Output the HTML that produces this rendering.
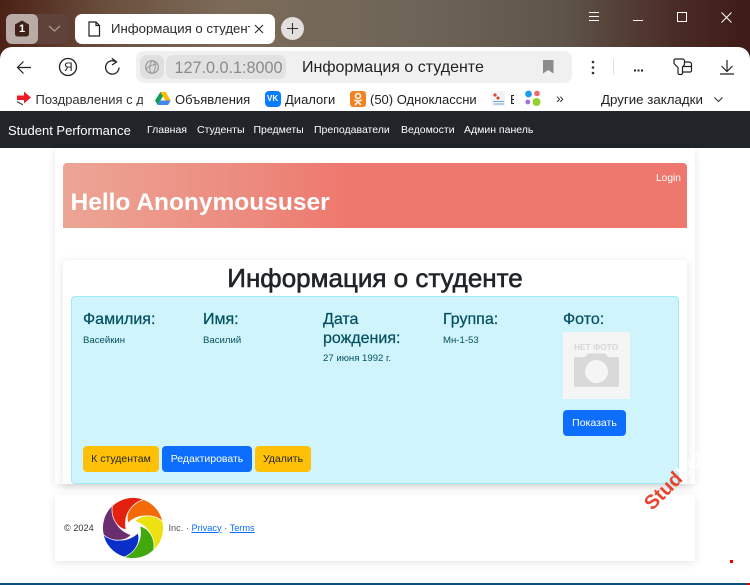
<!DOCTYPE html>
<html lang="ru"><head><meta charset="utf-8"><title>Информация о студенте</title>
<style>
html,body{margin:0;padding:0;width:750px;height:585px;overflow:hidden;background:#fff}
body{position:relative;font-family:"Liberation Sans","Noto Sans CJK SC",sans-serif;color:#212529}
.a{position:absolute;white-space:nowrap;line-height:1}
.b{position:absolute}
.btn{position:absolute;height:26px;line-height:26px;text-align:center;border-radius:4px;font-size:10.5px;white-space:nowrap}
.h{font-size:16px;color:#055160;line-height:1;-webkit-text-stroke:.25px #055160}
.s{font-size:9.6px;color:#055160}
.nav{color:#fff;font-size:10.5px;top:125px}
.bm{font-size:13px;color:#222;top:93px}
svg{position:absolute;overflow:visible}
</style></head><body>
<!-- browser chrome -->
<div class="b" style="left:0;top:0;width:750px;height:111px;background:linear-gradient(90deg,#4c2116 0%,#6b5140 15%,#7c6b58 30%,#6e6558 55%,#5f5449 75%,#4a2c26 90%,#3f1a17 100%)"></div>
<div class="b" style="left:6px;top:14px;width:63px;height:30px;border-radius:6px;background:#5f4239"></div>
<div class="b" style="left:6px;top:14px;width:32px;height:30px;border-radius:6px;background:#b9aba6"></div>
<svg style="left:13px;top:20px" width="18" height="18"><path d="M9 .5L16 4.5V14a2.500 2.500 0 0 1-2.500 2.500h-9A2.500 2.500 0 0 1 2 14V4.500Z" fill="#40211a"/></svg>
<div class="a" style="left:19px;top:24px;font-size:11px;font-weight:bold;color:#fff">1</div>
<svg style="left:48px;top:25px" width="14" height="8"><path d="M1 1l5.500 5L12 1" fill="none" stroke="#a89690" stroke-width="1.300"/></svg>
<div class="b" style="left:75px;top:14px;width:200px;height:30px;border-radius:7px;background:#fff"></div>
<svg style="left:88px;top:21px" width="13" height="16"><path d="M1 1h7l3.500 3.500V15H1Z M8 1v3.500h3.500" fill="none" stroke="#222" stroke-width="1.200"/></svg>
<div class="a" style="left:111px;top:22px;width:139px;overflow:hidden;font-size:13.200px;color:#2a2a2a">Информация о студент</div>
<svg style="left:254px;top:24px" width="10" height="10"><path d="M1 1l8 8M9 1l-8 8" stroke="#333" stroke-width="1.200"/></svg>
<div class="b" style="left:281px;top:17px;width:23px;height:23px;border-radius:50%;background:#e2dfdc"></div>
<svg style="left:287px;top:23px" width="11" height="11"><path d="M5.500 0v11M0 5.500h11" stroke="#333" stroke-width="1.100"/></svg>
<svg style="left:589px;top:12px" width="10" height="9"><path d="M0 .5h10M0 4.500h10M0 8.500h10" stroke="#fff" stroke-width="1"/></svg>
<div class="b" style="left:633px;top:20px;width:10px;height:1px;background:#fff"></div>
<div class="b" style="left:677px;top:12px;width:8px;height:8px;border:1px solid #fff"></div>
<svg style="left:721px;top:12px" width="11" height="11"><path d="M.5.500l10 10M10.500.500l-10 10" stroke="#fff" stroke-width="1"/></svg>
<!-- toolbar -->
<div class="b" style="left:0;top:47px;width:750px;height:64px;background:#fff;border-radius:12px 12px 0 0"></div>
<svg style="left:16px;top:60px" width="16" height="15"><path d="M15 7.500H1.500M7.500 1.500l-6 6 6 6" fill="none" stroke="#222" stroke-width="1.200"/></svg>
<svg style="left:58px;top:57px" width="20" height="20"><circle cx="10" cy="10" r="8.500" fill="none" stroke="#222" stroke-width="1.300"/></svg>
<div class="a" style="left:64px;top:61px;font-size:12px;color:#222">Я</div>
<svg style="left:104px;top:57px" width="17" height="19"><path d="M12.500 5.200A6.700 6.700 0 1 0 15 10.500" fill="none" stroke="#222" stroke-width="1.300"/><path d="M7.800 1.200L12.500 5l-4.500 3" fill="none" stroke="#222" stroke-width="1.300"/></svg>
<div class="b" style="left:136px;top:51px;width:436px;height:32px;border-radius:8px;background:#f0f0f0"></div>
<div class="b" style="left:140px;top:55px;width:24px;height:24px;border-radius:7px;background:#dfdfdf"></div>
<svg style="left:145px;top:60px" width="14" height="14"><circle cx="7" cy="7" r="6.300" fill="none" stroke="#999" stroke-width="1.200"/><path d="M1 9c3-3 6-4 11-5M7 1c-3 4-3 8-1 12M8 1c3 3 3 8 0 12" fill="none" stroke="#999"/></svg>
<div class="b" style="left:166px;top:55px;width:120px;height:24px;border-radius:7px;background:#e2e2e2"></div>
<div class="a" style="left:174.500px;top:60px;font-size:16.200px;color:#8a8a8a">127.0.0.1:8000</div>
<div class="a" style="left:302px;top:60px;font-size:16px;color:#222">Информация о студенте</div>
<svg style="left:543px;top:60px" width="11" height="14"><path d="M0 0h10.500v13.500L5.250 10 0 13.500Z" fill="#8c8c8c"/></svg>
<svg style="left:591px;top:60px" width="4" height="15"><circle cx="2" cy="2" r="1.300" fill="#333"/><circle cx="2" cy="7.500" r="1.300" fill="#333"/><circle cx="2" cy="13" r="1.300" fill="#333"/></svg>
<div class="b" style="left:613px;top:59px;width:1px;height:16px;background:#ddd"></div>
<svg style="left:634px;top:69px" width="10" height="3"><path d="M0 .5h2v2H0ZM3.500 .5h2v2h-2ZM7 .500h2v2H7Z" fill="#222"/></svg>
<svg style="left:673px;top:58px" width="20" height="18"><path d="M2.500 1h7a2 2 0 0 1 2 2v3.500L9.500 9v6a1.500 1.500 0 0 1-1.500 1.500H6.500A1.500 1.500 0 0 1 5 15V9.500L1 5.500V2.500A1.500 1.500 0 0 1 2.500 1Z M11 4h5a2.500 2.500 0 0 1 2.500 2.500v6a1.500 1.500 0 0 1-1.500 1.500H9.500 M10 8.500h8.500" fill="none" stroke="#222" stroke-width="1.200"/></svg>
<svg style="left:720px;top:60px" width="14" height="15"><path d="M7 0v11M1.500 6l5.500 5.500L12.500 6M0 14h14" fill="none" stroke="#222" stroke-width="1.200"/></svg>
<!-- bookmarks -->
<svg style="left:16px;top:91px" width="16" height="15"><path d="M8 0.500l7 6-7 6V9H1V4.500h7Z" fill="#ee1c25"/><path d="M1 10l6 3 0 1.500-6-3Z" fill="#555"/></svg>
<div class="a bm" style="left:35.500px;width:107px;overflow:hidden;color:#333">Поздравления с д</div>
<svg style="left:155px;top:91px" width="16" height="15"><path d="M5.300 1h5.400l5 8.500h-5.400Z" fill="#fbbc04"/><path d="M5.300 1L0 9.500 2.700 14l5.200-8.800Z" fill="#0f9d58"/><path d="M2.700 14h10.400l2.600-4.500H5.400Z" fill="#4285f4"/></svg>
<div class="a bm" style="left:175px">Объявления</div>
<div class="b" style="left:265px;top:91px;width:16px;height:16px;border-radius:4px;background:#0a7cff"></div>
<div class="a" style="left:267px;top:95px;font-size:8px;font-weight:bold;color:#fff">VK</div>
<div class="a bm" style="left:285px">Диалоги</div>
<div class="b" style="left:350px;top:91px;width:16px;height:16px;border-radius:3px;background:#f58220"></div>
<svg style="left:353px;top:92px" width="10" height="14"><circle cx="5" cy="4" r="2.500" fill="none" stroke="#fff" stroke-width="1.500"/><path d="M1.500 8c2 1.300 5 1.300 7 0M5 9v1M2 13l3-3 3 3" fill="none" stroke="#fff" stroke-width="1.500"/></svg>
<div class="a bm" style="left:370px;width:106px;overflow:hidden">(50) Одноклассни</div>
<svg style="left:491px;top:91px" width="14" height="15"><rect width="14" height="15" fill="#f1f4f6"/><path d="M4 2l2 2-2 2-2-2Z" fill="#e2452f"/><path d="M7 5l2 2-2 2-2-2Z" fill="#e2452f"/><path d="M2 10h11v1H2ZM3 12.500h10v1H3Z" fill="#7aa5d8"/></svg>
<div class="a bm" style="left:510px;width:4px;overflow:hidden">E</div>
<svg style="left:524px;top:90px" width="18" height="18"><circle cx="4.500" cy="4" r="3.400" fill="#1d9bf0"/><circle cx="13" cy="3.500" r="2.800" fill="#f4656f"/><circle cx="3.800" cy="12" r="2.400" fill="#a070e0"/><circle cx="12.500" cy="12" r="4" fill="#98cf30"/></svg>
<div class="a" style="left:556px;top:91px;font-size:14px;color:#333">»</div>
<div class="a bm" style="left:601px;font-size:13.300px">Другие закладки</div>
<svg style="left:714px;top:97px" width="9" height="6"><path d="M.5.500l4 4 4-4" fill="none" stroke="#333" stroke-width="1.100"/></svg>
<!-- navbar -->
<div class="b" style="left:0;top:111px;width:750px;height:37px;background:#212529"></div>
<div class="a" style="left:8px;top:124px;font-size:13px;color:#fff">Student Performance</div>
<div class="a nav" style="left:147px">Главная</div>
<div class="a nav" style="left:197px">Студенты</div>
<div class="a nav" style="left:253.500px">Предметы</div>
<div class="a nav" style="left:314px">Преподаватели</div>
<div class="a nav" style="left:401px">Ведомости</div>
<div class="a nav" style="left:464px">Админ панель</div>
<!-- container -->
<div class="b" style="left:55px;top:148px;width:640px;height:336px;background:#fff;box-shadow:0 2px 8px rgba(0,0,0,.1)"></div>
<div class="b" style="left:63px;top:163px;width:624px;height:65px;border-radius:4px 4px 0 0;background:linear-gradient(90deg,#eca595 0%,#ec8a7e 30%,#ee786e 45%,#ee786e 100%)"></div>
<div class="a" style="left:70.500px;top:191px;font-size:24.500px;font-weight:bold;color:#fff">Hello Anonymoususer</div>
<div class="a" style="left:656px;top:173.500px;font-size:10.200px;color:#fff">Login</div>
<div class="b" style="left:63px;top:260px;width:624px;height:224px;background:#fff;box-shadow:0 2px 8px rgba(0,0,0,.12)"></div>
<div class="a" style="left:63px;width:624px;text-align:center;top:265px;font-size:26px;color:#212529;-webkit-text-stroke:.6px #212529">Информация о студенте</div>
<div class="b" style="left:71px;top:296px;width:606px;height:186px;background:#cff4fc;border:1px solid #9eeaf9;border-radius:4px"></div>
<div class="a h" style="left:83px;top:312px">Фамилия:</div>
<div class="a s" style="left:83px;top:335.500px">Васейкин</div>
<div class="a h" style="left:203px;top:312px">Имя:</div>
<div class="a s" style="left:203px;top:335.500px">Василий</div>
<div class="a h" style="left:323px;top:310px;line-height:19px">Дата<br>рождения:</div>
<div class="a s" style="left:323px;top:354px">27 июня 1992 г.</div>
<div class="a h" style="left:443px;top:312px">Группа:</div>
<div class="a s" style="left:443px;top:335.500px">Мн-1-53</div>
<div class="a h" style="left:563px;top:312px">Фото:</div>
<div class="b" style="left:563px;top:332px;width:67px;height:67px;background:#f5f5f5"></div>
<div class="a" style="left:574px;top:343px;font-size:8.400px;font-weight:bold;color:#d6d6d6">НЕТ ФОТО</div>
<svg style="left:574px;top:353px" width="45" height="36"><path d="M2 4h9l3-3.500h17L34 4h9a2 2 0 0 1 2 2v26a2 2 0 0 1-2 2H2a2 2 0 0 1-2-2V6a2 2 0 0 1 2-2Z" fill="#d9d9d9"/><circle cx="22.500" cy="18.500" r="11.500" fill="#f5f5f5"/></svg>
<div class="btn" style="left:563px;top:410px;width:63px;background:#0d6efd;color:#fff">Показать</div>
<div class="btn" style="left:83px;top:446px;width:76px;background:#ffc107;color:#212529">К студентам</div>
<div class="btn" style="left:162px;top:446px;width:90px;background:#0d6efd;color:#fff">Редактировать</div>
<div class="btn" style="left:255px;top:446px;width:56px;background:#ffc107;color:#212529">Удалить</div>
<!-- footer -->
<div class="b" style="left:55px;top:495px;width:640px;height:66px;background:#fff;box-shadow:0 2px 8px rgba(0,0,0,.1)"></div>
<div class="a" style="left:64px;top:523.500px;font-size:9.200px;color:#333">© 2024</div>
<svg style="left:132.500px;top:528px" width="1" height="1">
<g stroke="#fff" stroke-width=".7">
<path d="M9-29A30 30 0 0 1 30-5C20-14 6-15-5-5-8-14-2-25 9-29Z" fill="#f46a06"/>
<path d="M9-29A30 30 0 0 1 30-5C20-14 6-15-5-5-8-14-2-25 9-29Z" fill="#ede10f" transform="rotate(60)"/>
<path d="M9-29A30 30 0 0 1 30-5C20-14 6-15-5-5-8-14-2-25 9-29Z" fill="#43a80c" transform="rotate(120)"/>
<path d="M9-29A30 30 0 0 1 30-5C20-14 6-15-5-5-8-14-2-25 9-29Z" fill="#0a2fc8" transform="rotate(180)"/>
<path d="M9-29A30 30 0 0 1 30-5C20-14 6-15-5-5-8-14-2-25 9-29Z" fill="#6a2e6e" transform="rotate(240)"/>
<path d="M9-29A30 30 0 0 1 30-5C20-14 6-15-5-5-8-14-2-25 9-29Z" fill="#e2210f" transform="rotate(300)"/>
</g></svg>
<div class="a" style="left:168.500px;top:523.500px;font-size:9.200px;color:#555">Inc. · <span style="color:#0d6efd;text-decoration:underline">Privacy</span> · <span style="color:#0d6efd;text-decoration:underline">Terms</span></div>
<!-- watermark -->
<div class="a" style="left:655px;top:493.500px;font-size:20px;font-weight:bold;color:#e8452f;transform:rotate(-45deg);transform-origin:0 100%">Stud<span style="color:#fff;opacity:.85">Learn</span></div>
<div class="b" style="left:730px;top:560px;width:3px;height:3px;background:#e00"></div>
<div class="b" style="left:0;top:583px;width:750px;height:2px;background:#0b4f7d"></div>
<div class="b" style="left:747px;top:583px;width:3px;height:2px;background:#e00"></div>
</body></html>
